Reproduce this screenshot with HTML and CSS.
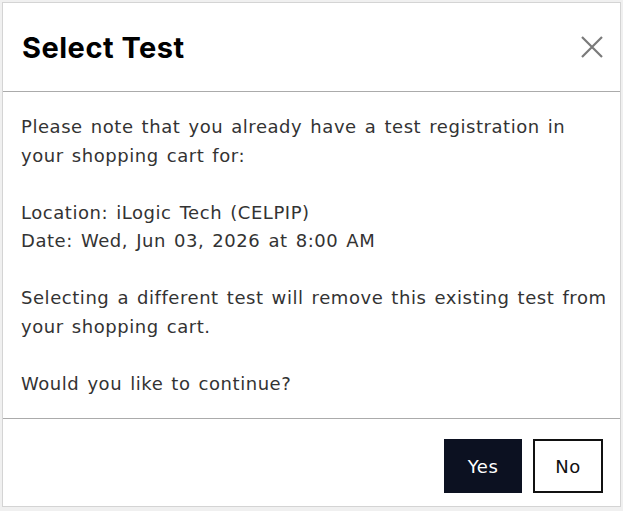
FILE: index.html
```html
<!DOCTYPE html>
<html>
<head>
<meta charset="utf-8">
<link rel="stylesheet" href="styles.css">
</head>
<body>
<div class="dialog">
  <div class="header">
    <h1 class="title">Select Test</h1>
    <button class="close" aria-label="Close">
      <svg width="22" height="22" viewBox="0 0 22 22"><path d="M1 1 L21 21 M21 1 L1 21" stroke="#7a7a7a" stroke-width="2.2" fill="none"/></svg>
    </button>
  </div>
  <div class="body">
    <p>Please note that you already have a test registration in your shopping cart for:</p>
    <p>Location: iLogic Tech (CELPIP)<br>Date: Wed, Jun 03, 2026 at 8:00 AM</p>
    <p>Selecting a different test will remove this existing test from your shopping cart.</p>
    <p>Would you like to continue?</p>
  </div>
  <div class="footer">
    <button class="btn btn-yes">Yes</button>
    <button class="btn btn-no">No</button>
  </div>
</div>
</body>
</html>
```
FILE: styles.css
```css
html, body { margin: 0; padding: 0; background: #f0f0f0; }
body { width: 623px; height: 511px; overflow: hidden; }
.dialog {
  margin: 2px 2px 0 2px;
  height: 505px;
  background: #fff;
  border: 1px solid #d4d4d4;
  box-sizing: border-box;
  display: flex;
  flex-direction: column;
  font-family: "DejaVu Sans", sans-serif;
}
.header {
  height: 88px;
  display: flex;
  align-items: center;
  justify-content: space-between;
  padding: 0 17px 0 19px;
  border-bottom: 1px solid #ababab;
  flex: none;
}
.title {
  margin: 0;
  font-family: Inter, sans-serif;
  font-weight: 700;
  font-size: 29px;
  color: #000;
  letter-spacing: 0.5px;
}
.close {
  background: none;
  border: 0;
  padding: 0;
  width: 22px;
  height: 22px;
  display: flex;
}
.body {
  padding: 21px 6px 20px 18px;
  border-bottom: 1px solid #ababab;
  color: #333;
  font-size: 18px;
  line-height: 28.5px;
  letter-spacing: 0.55px;
  word-spacing: 1.8px;
}
.body p { margin: 0 0 28.5px 0; }
.body p:last-child { margin-bottom: 0; }
.footer {
  flex: 1;
  display: flex;
  justify-content: flex-end;
  align-items: flex-start;
  gap: 11px;
  padding: 20px 17px 0 0;
}
.btn {
  height: 54px;
  font-family: "DejaVu Sans", sans-serif;
  font-size: 18px;
  letter-spacing: 0.5px;
  cursor: pointer;
}
.btn-yes {
  width: 78px;
  background: #0c1121;
  color: #fff;
  border: 0;
}
.btn-no {
  width: 70px;
  background: #fff;
  color: #111;
  border: 2px solid #111;
}
```
